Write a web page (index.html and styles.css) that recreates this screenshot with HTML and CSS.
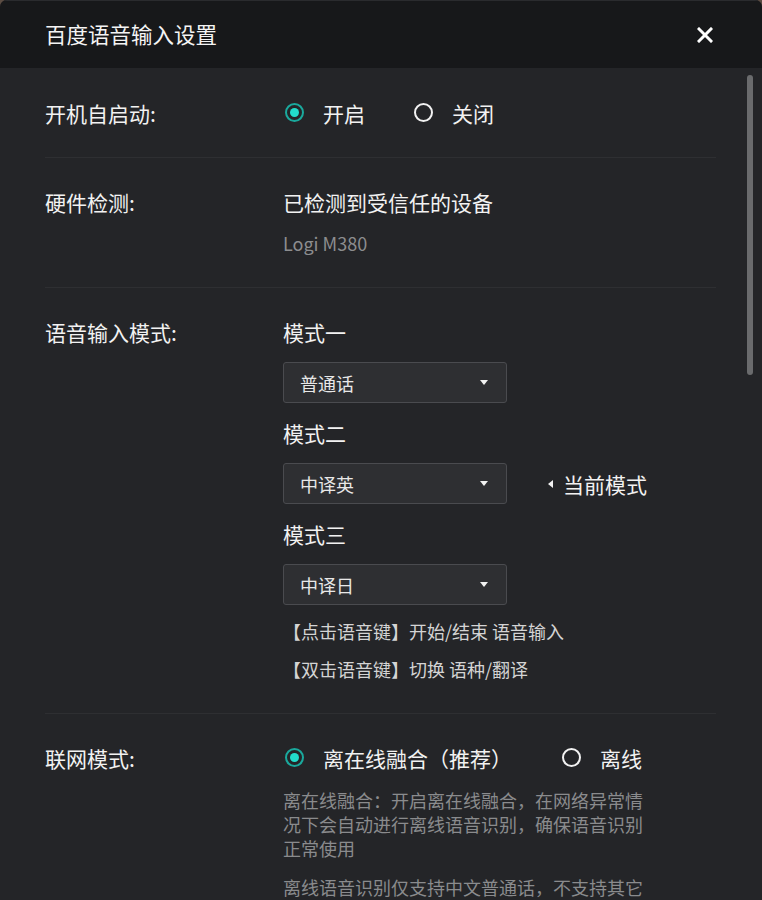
FILE: index.html
```html
<!DOCTYPE html>
<html lang="zh-CN">
<head>
<meta charset="utf-8">
<title>百度语音输入设置</title>
<link rel="stylesheet" href="styles.css">
</head>
<body>
<div class="window">
  <header class="titlebar">
    <h1 class="title">百度语音输入设置</h1>
    <button class="close" aria-label="关闭">
      <svg width="16" height="16" viewBox="0 0 16 16"><path d="M2 2 L14 14 M14 2 L2 14" stroke="#fff" stroke-width="3" stroke-linecap="square"/></svg>
    </button>
  </header>
  <main class="content">
    <section class="row first">
      <div class="label">开机自启动:</div>
      <div class="value">
        <div class="radios">
          <label class="radio checked gap-a"><span class="dot"></span>开启</label>
          <label class="radio"><span class="dot"></span>关闭</label>
        </div>
      </div>
    </section>
    <section class="row">
      <div class="label">硬件检测:</div>
      <div class="value">
        <div class="line">已检测到受信任的设备</div>
        <div class="device">Logi M380</div>
      </div>
    </section>
    <section class="row">
      <div class="label">语音输入模式:</div>
      <div class="value">
        <div class="mode-title">模式一</div>
        <div class="mode-line">
          <div class="select"><span>普通话</span><span class="caret"></span></div>
        </div>
        <div class="mode-title">模式二</div>
        <div class="mode-line">
          <div class="select"><span>中译英</span><span class="caret"></span></div>
          <div class="current"><span class="pointer"></span>当前模式</div>
        </div>
        <div class="mode-title">模式三</div>
        <div class="mode-line">
          <div class="select"><span>中译日</span><span class="caret"></span></div>
        </div>
        <p class="note">【点击语音键】开始/结束 语音输入</p>
        <p class="note">【双击语音键】切换 语种/翻译</p>
      </div>
    </section>
    <section class="row last">
      <div class="label">联网模式:</div>
      <div class="value">
        <div class="radios">
          <label class="radio checked gap-b"><span class="dot"></span>离在线融合（推荐）</label>
          <label class="radio"><span class="dot"></span>离线</label>
        </div>
        <p class="desc">离在线融合：开启离在线融合，在网络异常情况下会自动进行离线语音识别，确保语音识别正常使用</p>
        <p class="desc">离线语音识别仅支持中文普通话，不支持其它语种及翻译功能</p>
      </div>
    </section>
  </main>
  <div class="scrollbar"></div>
</div>
</body>
</html>
```

FILE: styles.css
```css
html, body {
  margin: 0;
  padding: 0;
  background: #5b4c42;
}
body {
  font-family: "Noto Sans CJK SC", "Noto Sans", sans-serif;
  color: #f2f2f2;
}
.window {
  position: relative;
  width: 762px;
  height: 900px;
  overflow: hidden;
  background: #242528;
  border-radius: 7px 7px 0 0;
}
.titlebar {
  height: 68px;
  background: #17181a;
  display: flex;
  align-items: center;
  justify-content: space-between;
  padding: 0 49px 0 45px;
  box-sizing: border-box;
  border-top: 1px solid #2a2b2e;
}
.title {
  margin: 0 0 2px;
  font-size: 21.5px;
  font-weight: 400;
  line-height: 30px;
  color: #f4f4f4;
}
.close {
  background: none;
  border: 0;
  padding: 0;
  width: 16px;
  height: 16px;
  display: flex;
}
.content {
  padding: 0 46px 0 45px;
}
.row {
  display: grid;
  grid-template-columns: 238px 1fr;
  padding: 29px 0 29px;
  border-bottom: 1px solid #2e2f32;
}
.row.first { padding-top: 30px; }
.row.last { border-bottom: 0; }
.label, .line, .mode-title, .current {
  font-size: 21px;
  line-height: 30px;
}
.radios {
  display: flex;
  align-items: center;
  height: 30px;
  font-size: 21px;
  padding-left: 2px;
}
.radio {
  display: flex;
  align-items: center;
  line-height: 30px;
}
.radio.gap-a { margin-right: 49px; }
.radio.gap-b { margin-right: 50px; }
.dot {
  position: relative;
  width: 19px;
  height: 19px;
  box-sizing: border-box;
  border: 2px solid #f2f2f2;
  border-radius: 50%;
  margin: 0 19px 2px 0;
}
.radio.checked .dot {
  border-color: #1aa99d;
}
.radio.checked .dot::after {
  content: "";
  position: absolute;
  left: 3px;
  top: 3px;
  width: 9px;
  height: 9px;
  border-radius: 50%;
  background: #22dccb;
}
.device {
  margin-top: 11px;
  font-size: 18px;
  line-height: 30px;
  color: #8c8d8f;
}
.mode-title { margin-bottom: 15px; }
.mode-line {
  display: flex;
  align-items: center;
  margin-bottom: 15px;
}
.select {
  width: 224px;
  height: 41px;
  box-sizing: border-box;
  border: 1px solid #4a4b4f;
  border-radius: 3px;
  background: #2e2f32;
  display: flex;
  align-items: center;
  justify-content: space-between;
  padding: 0 18px 0 16px;
  font-size: 18px;
  color: #e8e8e8;
}
.caret {
  width: 0;
  height: 0;
  border-left: 4px solid transparent;
  border-right: 4px solid transparent;
  border-top: 5px solid #f2f2f2;
}
.current {
  display: flex;
  align-items: center;
  margin-left: 41px;
}
.pointer {
  width: 0;
  height: 0;
  border-top: 4px solid transparent;
  border-bottom: 4px solid transparent;
  border-right: 5px solid #f2f2f2;
  margin-right: 10px;
}
.note {
  margin: 0;
  font-size: 18px;
  line-height: 30px;
  color: #d4d4d4;
}
.mode-line + .note { margin-top: -4px; }
.note + .note { margin-top: 8px; }
.desc {
  margin: 15px 0 0;
  width: 362px;
  font-size: 18px;
  line-height: 24px;
  color: #8a8b8d;
}
.scrollbar {
  position: absolute;
  top: 75px;
  left: 747px;
  width: 6px;
  height: 300px;
  border-radius: 3px;
  background: #6a6b6d;
}
```
